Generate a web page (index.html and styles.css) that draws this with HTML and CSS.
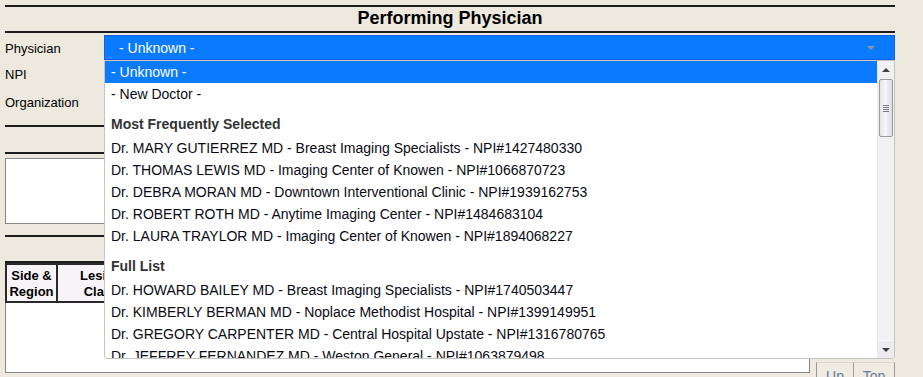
FILE: index.html
```html
<!DOCTYPE html>
<html>
<head>
<meta charset="utf-8">
<title>Performing Physician</title>
<link rel="stylesheet" href="styles.css">
</head>
<body>
<div class="page">
  <div class="section-title">Performing Physician</div>

  <div class="form">
    <div class="row row-physician">
      <div class="label">Physician</div>
      <div class="field select-wrap">
        <div class="select">
          <span class="select-text">- Unknown -</span>
          <span class="caret"></span>
        </div>
        <div class="dropdown">
          <div class="options">
            <div class="opt selected">- Unknown -</div>
            <div class="opt">- New Doctor -</div>
            <div class="group">Most Frequently Selected</div>
            <div class="opt">Dr. MARY GUTIERREZ MD - Breast Imaging Specialists - NPI#1427480330</div>
            <div class="opt">Dr. THOMAS LEWIS MD - Imaging Center of Knowen - NPI#1066870723</div>
            <div class="opt">Dr. DEBRA MORAN MD - Downtown Interventional Clinic - NPI#1939162753</div>
            <div class="opt">Dr. ROBERT ROTH MD - Anytime Imaging Center - NPI#1484683104</div>
            <div class="opt">Dr. LAURA TRAYLOR MD - Imaging Center of Knowen - NPI#1894068227</div>
            <div class="group">Full List</div>
            <div class="opt">Dr. HOWARD BAILEY MD - Breast Imaging Specialists - NPI#1740503447</div>
            <div class="opt">Dr. KIMBERLY BERMAN MD - Noplace Methodist Hospital - NPI#1399149951</div>
            <div class="opt">Dr. GREGORY CARPENTER MD - Central Hospital Upstate - NPI#1316780765</div>
            <div class="opt">Dr. JEFFREY FERNANDEZ MD - Weston General - NPI#1063879498</div>
          </div>
          <div class="scrollbar">
            <div class="sb-btn"><span class="arrow-up"></span></div>
            <div class="sb-track">
              <div class="sb-thumb">
                <span class="grip"></span>
                <span class="grip"></span>
                <span class="grip"></span>
                <span class="grip"></span>
              </div>
            </div>
            <div class="sb-btn sb-btn-down"><span class="arrow-down"></span></div>
          </div>
        </div>
      </div>
    </div>
    <div class="row row-npi">
      <div class="label">NPI</div>
      <div class="field"></div>
    </div>
    <div class="row row-org">
      <div class="label">Organization</div>
      <div class="field"></div>
    </div>
  </div>

  <div class="rule rule-a"></div>
  <div class="rule rule-b"></div>
  <div class="notes"></div>
  <div class="rule rule-c"></div>
  <div class="rule rule-d"></div>

  <div class="bottom">
    <div class="panel">
      <table class="grid">
        <tr>
          <th class="col-side">Side &amp;<br>Region</th>
          <th class="col-lesion">Lesion<br>Class</th>
          <th class="col-other"></th>
        </tr>
      </table>
    </div>
    <div class="nav">
      <div class="nav-btn nav-up">Up</div>
      <div class="nav-btn nav-top">Top</div>
    </div>
  </div>
</div>
</body>
</html>
```

FILE: styles.css
```css
html, body {
  margin: 0;
  padding: 0;
  background: #ede9de;
  font-family: "Liberation Sans", Arial, sans-serif;
  font-size: 13px;
  color: #000;
  overflow: hidden;
}

.page {
  width: 890px;
  margin-left: 5px;
  padding-top: 5px;
}

.section-title {
  border-top: 2px solid #1c1c1c;
  border-bottom: 2px solid #1c1c1c;
  height: 22px;
  line-height: 22px;
  padding-bottom: 2px;
  text-align: center;
  font-weight: bold;
  font-size: 18px;
}

.form {
  margin-top: 2px;
}

.row {
  display: flex;
  align-items: center;
}

.row-physician { height: 25px; }
.row-npi { height: 28px; }
.row-org { height: 28px; }

.label {
  width: 99px;
  flex: none;
  padding-top: 1px;
}

.field {
  flex: 1;
  height: 100%;
}

.select-wrap {
  position: relative;
}

.select {
  box-sizing: border-box;
  height: 25px;
  background: #0a7bff;
  border: 1px solid #1a5fe0;
  color: #fff;
  font-size: 14px;
  display: flex;
  align-items: center;
  padding-left: 14px;
  padding-right: 19px;
}

.select-text {
  flex: 1;
  padding-top: 1px;
}

.caret {
  width: 0;
  height: 0;
  border-left: 4px solid transparent;
  border-right: 4px solid transparent;
  border-top: 4px solid #8a93a6;
  margin-top: 1px;
}

.dropdown {
  position: absolute;
  left: 0;
  top: 25px;
  width: 791px;
  height: 299px;
  box-sizing: border-box;
  background: #fff;
  border: 1px solid #c4c4c4;
  border-radius: 0 0 3px 3px;
  display: flex;
  overflow: hidden;
  z-index: 10;
  font-size: 14px;
}

.options {
  flex: 1;
  overflow: hidden;
}

.opt {
  height: 22px;
  line-height: 22px;
  padding-left: 6px;
  white-space: nowrap;
  color: #0a0a14;
}

.opt.selected {
  background: #0a7bff;
  color: #fff;
}

.group {
  height: 22px;
  line-height: 22px;
  padding-top: 8px;
  padding-bottom: 2px;
  padding-left: 6px;
  font-weight: bold;
  color: #333;
  white-space: nowrap;
}

.scrollbar {
  width: 16px;
  flex: none;
  display: flex;
  flex-direction: column;
  background: #f1f0f3;
  border-left: 1px solid #e8e8ec;
}

.sb-btn {
  height: 17px;
  flex: none;
  display: flex;
  align-items: center;
  justify-content: center;
}

.sb-btn-down {
  background: #ecebef;
  border-top: 1px solid #f8f8fa;
}

.arrow-up {
  width: 0;
  height: 0;
  border-left: 4px solid transparent;
  border-right: 4px solid transparent;
  border-bottom: 4px solid #404040;
}

.arrow-down {
  width: 0;
  height: 0;
  border-left: 4px solid transparent;
  border-right: 4px solid transparent;
  border-top: 4px solid #404040;
}

.sb-track {
  flex: 1;
  padding-top: 1px;
}

.sb-thumb {
  box-sizing: border-box;
  width: 14px;
  height: 58px;
  margin-left: 1px;
  border: 1px solid #9a9a9e;
  border-radius: 2px;
  background: linear-gradient(to right, #e4e4e8, #f7f7f9 45%, #dcdce2);
  display: flex;
  flex-direction: column;
  align-items: center;
  justify-content: center;
  gap: 1px;
}

.grip {
  display: block;
  width: 6px;
  height: 1px;
  background: #7a7a80;
}

.rule {
  height: 2px;
  background: #1c1c1c;
}

.rule-a { margin-top: 9px; }
.rule-b { margin-top: 25px; }
.rule-c { margin-top: 11px; }
.rule-d { margin-top: 24px; }

.notes {
  margin-top: 4px;
  height: 66px;
  box-sizing: border-box;
  background: #fff;
  border: 1px solid #888;
}

.bottom {
  display: flex;
  align-items: flex-start;
}

.panel {
  width: 805px;
  height: 110px;
  box-sizing: border-box;
  background: #fff;
  border: 1px solid #8a8a8a;
  border-top: none;
  flex: none;
}

.grid {
  border: 1px solid #2a2a2a;
  border-spacing: 0;
  margin-left: -1px;
  background: #f6f4f6;
}

.grid th {
  border: 1px solid #2a2a2a;
  font-weight: bold;
  font-size: 13px;
  line-height: 16px;
  padding: 3px 2px 1px;
  text-align: center;
  vertical-align: middle;
}

.col-side { width: 45px; }
.col-lesion { width: 82px; }
.col-other { width: 360px; }

.nav {
  display: flex;
  margin-left: 6px;
  margin-top: 99px;
}

.nav-btn {
  box-sizing: border-box;
  height: 30px;
  padding-top: 5px;
  line-height: 16px;
  font-size: 14px;
  color: #6b7a98;
  text-align: center;
  border: 1px solid #9a9a9a;
  border-top-color: #d8d6ce;
  background: #eeebe2;
}

.nav-up { width: 38px; }
.nav-top { width: 41px; border-left: none; }
```
